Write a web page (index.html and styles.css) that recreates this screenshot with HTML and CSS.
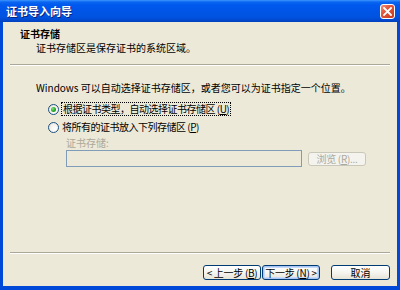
FILE: index.html
```html
<!DOCTYPE html>
<html>
<head>
<meta charset="utf-8">
<link rel="stylesheet" href="styles.css">
</head>
<body>
<div class="window">
  <div class="titlebar">
    <span class="title">证书导入向导</span>
    <div class="close">
      <svg width="9" height="9" viewBox="0 0 9 9"><path d="M1 1 L8 8 M8 1 L1 8" stroke="#fff" stroke-width="1.8" stroke-linecap="square"/></svg>
    </div>
  </div>
  <div class="client">
    <div class="header">
      <div class="h-title">证书存储</div>
      <div class="h-sub">证书存储区是保存证书的系统区域。</div>
    </div>
    <div class="sep"></div>
    <div class="content">
      <div class="intro">Windows 可以自动选择证书存储区，或者您可以为证书指定一个位置。</div>
      <div class="radio-row first">
        <span class="radio checked"><span class="dot"></span></span>
        <span class="focus">根据证书类型，自动选择证书存储区 (<u>U</u>)</span>
      </div>
      <div class="radio-row">
        <span class="radio"></span>
        <span class="rlabel">将所有的证书放入下列存储区 (<u>P</u>)</span>
      </div>
      <div class="store-label">证书存储:</div>
      <div class="store-row">
        <div class="textbox"></div>
        <div class="btn disabled browse">浏览 (<u>R</u>)...</div>
      </div>
    </div>
    <div class="spacer"></div>
    <div class="sep bottom"></div>
    <div class="buttons">
      <div class="btn">&lt; 上一步 (<u>B</u>)</div>
      <div class="btn default">下一步 (<u>N</u>) &gt;</div>
      <div class="btn cancel">取消</div>
    </div>
  </div>
</div>
</body>
</html>
```

FILE: styles.css
```css
* { box-sizing: border-box; }
html, body { margin: 0; padding: 0; }
body {
  width: 400px;
  height: 290px;
  overflow: hidden;
  font-family: "Noto Sans CJK SC", "DejaVu Sans", sans-serif;
  font-size: 10px;
  color: #000;
}
.window {
  width: 400px;
  height: 290px;
  display: flex;
  flex-direction: column;
  background: #0049D8;
}
.titlebar {
  height: 22px;
  flex: none;
  display: flex;
  align-items: center;
  justify-content: space-between;
  padding: 0 5px 0 6px;
  background: linear-gradient(to bottom, #3D95FF 0px, #0A66F0 2px, #0058EE 5px, #0055E6 12px, #0053E0 17px, #0046C8 21px, #003DB6 22px);
}
.title {
  color: #fff;
  font-weight: bold;
  font-size: 11px;
  line-height: 14px;
  text-shadow: 1px 1px 0 #0A1F80;
}
.close {
  width: 15px;
  height: 15px;
  margin-top: 1px;
  border: 1px solid #fff;
  border-radius: 3px;
  background: linear-gradient(135deg, #F0907A 0%, #E2553A 40%, #C63C1E 100%);
  display: flex;
  align-items: center;
  justify-content: center;
}
.close svg { display: block; }
.client {
  flex: 1;
  display: flex;
  flex-direction: column;
  background: #ECE9D8;
  margin: 0 3px 4px 3px;
}
.header { padding: 6px 0 0 17px; }
.h-title { font-weight: bold; line-height: 12px; }
.h-sub { line-height: 12px; margin-top: 2px; padding-left: 16px; }
.sep {
  height: 2px;
  margin: 10px 7px 0 7px;
  border-top: 1px solid #ACA899;
  border-bottom: 1px solid #fff;
}
.content { padding: 16px 0 0 33px; }
.intro { line-height: 12px; }
.radio-row {
  display: flex;
  align-items: center;
  height: 14px;
  margin-left: 12px;
  margin-top: 4px;
  letter-spacing: -0.5px;
}
.radio-row.first { margin-top: 8px; }
.radio {
  width: 11px;
  height: 11px;
  border-radius: 50%;
  border: 1px solid #1C5180;
  background: radial-gradient(circle at 65% 65%, #fff 0%, #F4F3EE 50%, #DCD8C8 100%);
  display: flex;
  align-items: center;
  justify-content: center;
  margin-right: 2px;
  flex: none;
}
.radio .dot {
  width: 5px;
  height: 5px;
  border-radius: 50%;
  background: radial-gradient(circle at 35% 35%, #7BE07B 0%, #21A121 60%, #1A8A1A 100%);
}
.focus {
  border: 1px dotted #000;
  line-height: 12px;
  padding: 0 1px;
}
.rlabel { line-height: 12px; padding-left: 1px; }
.store-label {
  color: #ACA899;
  line-height: 12px;
  margin: 3px 0 0 30px;
}
.store-row {
  display: flex;
  align-items: center;
  margin: 1px 0 0 30px;
  gap: 6px;
}
.textbox {
  width: 236px;
  height: 17px;
  border: 1px solid #7F9DB9;
  background: #ECE9D8;
}
.btn {
  height: 15px;
  display: flex;
  align-items: center;
  justify-content: center;
  border: 1px solid #003C74;
  border-radius: 3px;
  background: linear-gradient(to bottom, #FFFFFF 0%, #F6F5F0 50%, #E6E3D6 100%);
  line-height: 12px;
  white-space: nowrap;
}
.btn.disabled {
  border-color: #C9C7BA;
  color: #ACA899;
  background: #F4F3EE;
}
.browse { width: 58px; height: 14px; letter-spacing: -0.3px; }
.spacer { flex: 1; }
.sep.bottom { margin-top: 0; }
.buttons {
  display: flex;
  justify-content: flex-end;
  padding: 11px 7px 6px 0;
}
.buttons .btn { width: 58px; letter-spacing: -0.3px; }
.buttons .btn + .btn { margin-left: 1px; }
.buttons .btn.cancel { width: 59px; margin-left: 11px; letter-spacing: 0; }
.btn.default {
  box-shadow: inset 0 0 0 1px #A8C6F5, inset 0 0 0 2px #C9DAF8;
}
```
